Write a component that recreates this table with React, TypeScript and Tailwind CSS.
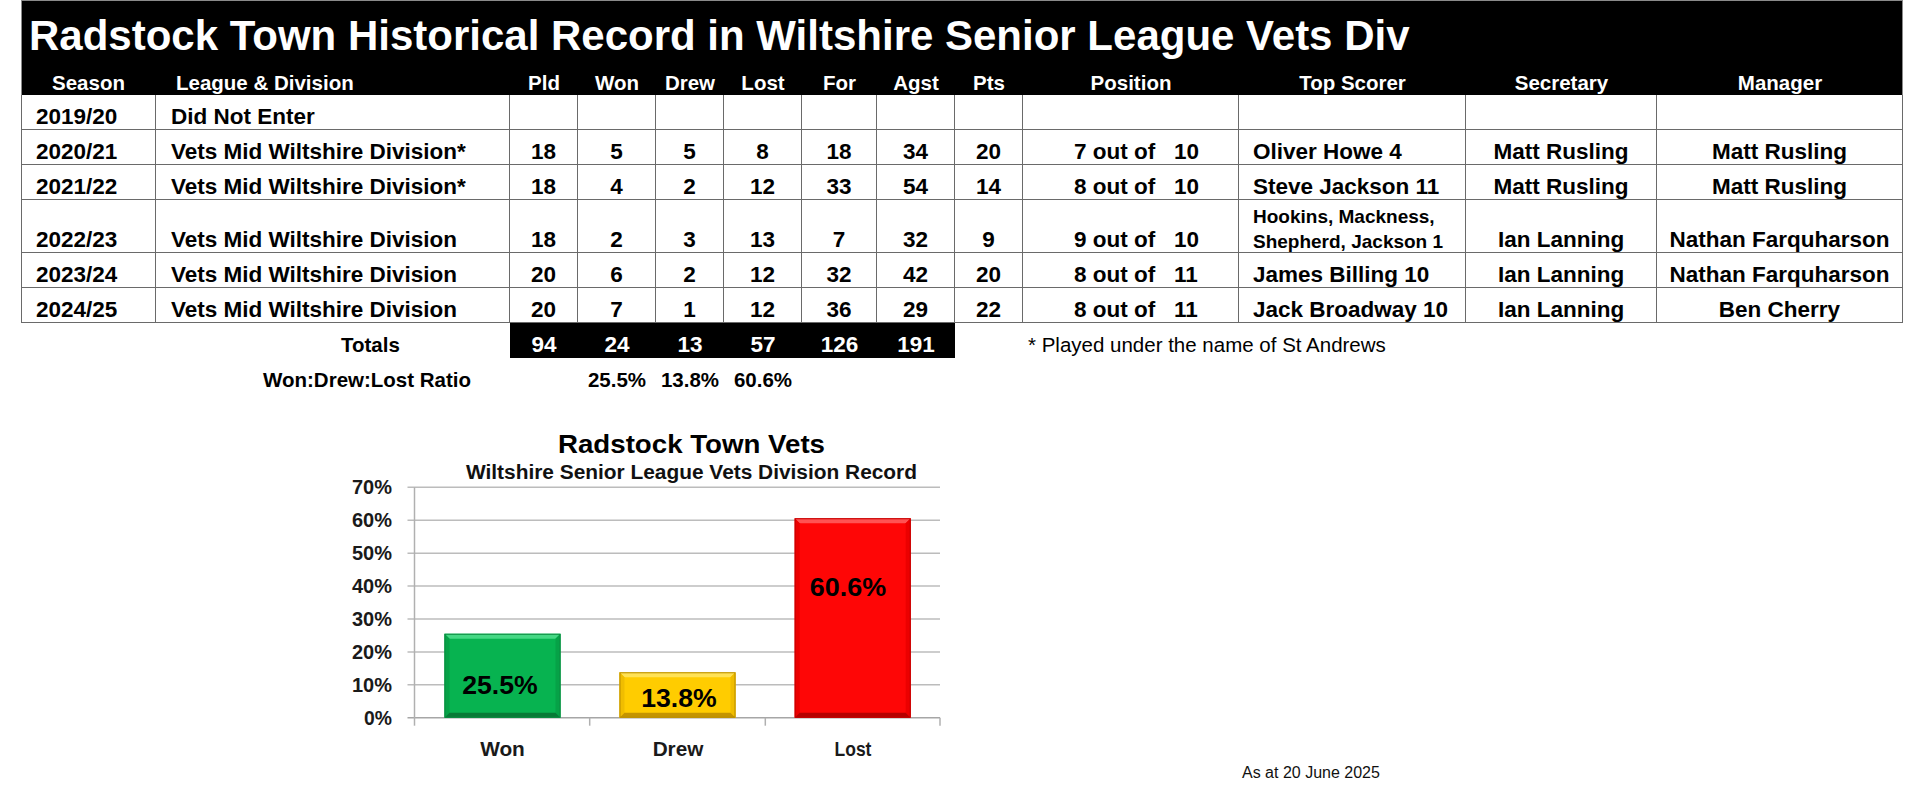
import React from "react";

type Row = {
  season: string;
  league: string;
  vals: (number | string)[];
  pos: [string, string] | null;
  scorer: string | string[];
  sec: string;
  mgr: string;
  tall?: boolean;
};

const rows: Row[] = [
  { season: "2019/20", league: "Did Not Enter", vals: ["", "", "", "", "", "", ""], pos: null, scorer: "", sec: "", mgr: "" },
  { season: "2020/21", league: "Vets Mid Wiltshire Division*", vals: [18, 5, 5, 8, 18, 34, 20], pos: ["7", "10"], scorer: "Oliver Howe 4", sec: "Matt Rusling", mgr: "Matt Rusling" },
  { season: "2021/22", league: "Vets Mid Wiltshire Division*", vals: [18, 4, 2, 12, 33, 54, 14], pos: ["8", "10"], scorer: "Steve Jackson 11", sec: "Matt Rusling", mgr: "Matt Rusling" },
  { season: "2022/23", league: "Vets Mid Wiltshire Division", vals: [18, 2, 3, 13, 7, 32, 9], pos: ["9", "10"], scorer: ["Hookins, Mackness,", "Shepherd, Jackson 1"], sec: "Ian Lanning", mgr: "Nathan Farquharson", tall: true },
  { season: "2023/24", league: "Vets Mid Wiltshire Division", vals: [20, 6, 2, 12, 32, 42, 20], pos: ["8", "11"], scorer: "James Billing 10", sec: "Ian Lanning", mgr: "Nathan Farquharson" },
  { season: "2024/25", league: "Vets Mid Wiltshire Division", vals: [20, 7, 1, 12, 36, 29, 22], pos: ["8", "11"], scorer: "Jack Broadway 10", sec: "Ian Lanning", mgr: "Ben Cherry" },
];

const numW = ["w-[68px]", "w-[78px]", "w-[68px]", "w-[78px]", "w-[75px]", "w-[78px]", "w-[68px]"];
const numHead = ["Pld", "Won", "Drew", "Lost", "For", "Agst", "Pts"];

const cellB = "flex items-end shrink-0 border-r border-b border-[#6a6a6a] leading-[24px]";

function Header() {
  return (
    <div className="w-[1882px] bg-black border-t border-l border-r border-[#8a8a8a] text-white">
      <div className="h-[61px] pt-[14px] pl-[7px] text-[42px] leading-[42px] font-bold whitespace-nowrap">
        Radstock Town Historical Record in Wiltshire Senior League Vets Div
      </div>
      <div className="flex h-[33px] items-end text-[20.5px] leading-[24px] font-bold -ml-px">
        <div className="w-[135px] shrink-0 text-center">Season</div>
        <div className="w-[354px] shrink-0 pl-[20px]">League &amp; Division</div>
        {numHead.map((h, i) => (
          <div key={h} className={`${numW[i]} shrink-0 text-center`}>
            {h}
          </div>
        ))}
        <div className="w-[216px] shrink-0 text-center">Position</div>
        <div className="w-[227px] shrink-0 text-center">Top Scorer</div>
        <div className="w-[191px] shrink-0 text-center">Secretary</div>
        <div className="w-[246px] shrink-0 text-center">Manager</div>
      </div>
    </div>
  );
}

function BodyRow({ r }: { r: Row }) {
  const h = r.tall ? "h-[53px]" : "h-[35px]";
  return (
    <div className={`flex ${h} text-[22.5px] font-bold text-black`}>
      <div className={`${cellB} border-l w-[135px] pl-[14px]`}>{r.season}</div>
      <div className={`${cellB} w-[354px] pl-[15px] whitespace-nowrap`}>{r.league}</div>
      {r.vals.map((v, i) => (
        <div key={i} className={`${cellB} ${numW[i]} justify-center`}>
          {v}
        </div>
      ))}
      <div className={`${cellB} w-[216px] pl-[51px] whitespace-pre`}>
        {r.pos ? `${r.pos[0]} out of   ${r.pos[1]}` : ""}
      </div>
      <div className={`${cellB} w-[227px] pl-[14px] whitespace-nowrap`}>
        {Array.isArray(r.scorer) ? (
          <div className="relative top-[2px] text-[19px] leading-[25px]">
            <div>{r.scorer[0]}</div>
            <div>{r.scorer[1]}</div>
          </div>
        ) : (
          r.scorer
        )}
      </div>
      <div className={`${cellB} w-[191px] justify-center whitespace-nowrap`}>{r.sec}</div>
      <div className={`${cellB} w-[246px] justify-center whitespace-nowrap`}>{r.mgr}</div>
    </div>
  );
}

const BASE = 297.7;
const K = 3.291;

function Bar({
  cx,
  value,
  face,
  light,
  side,
  dark,
  border,
}: {
  cx: number;
  value: number;
  face: string;
  light: string;
  side: string;
  dark: string;
  border: string;
}) {
  const w = 116;
  const x = cx - w / 2;
  const y = BASE - value * K;
  const h = BASE - y;
  const b = 5;
  return (
    <g>
      <rect x={x} y={y} width={w} height={h} fill={face} />
      <polygon points={`${x},${y} ${x + w},${y} ${x + w - b},${y + b} ${x + b},${y + b}`} fill={light} />
      <polygon points={`${x},${y} ${x + b},${y + b} ${x + b},${y + h - b} ${x},${y + h}`} fill={side} />
      <polygon points={`${x + w},${y} ${x + w},${y + h} ${x + w - b},${y + h - b} ${x + w - b},${y + b}`} fill={side} />
      <polygon points={`${x},${y + h} ${x + b},${y + h - b} ${x + w - b},${y + h - b} ${x + w},${y + h}`} fill={dark} />
      <rect x={x + 0.5} y={y + 0.5} width={w - 1} height={h - 1} fill="none" stroke={border} strokeWidth={1} />
    </g>
  );
}

function Chart() {
  const font = "'Liberation Sans', Arial, sans-serif";
  const grid = [0, 10, 20, 30, 40, 50, 60, 70];
  return (
    <svg width="680" height="387" viewBox="0 0 680 387" className="shrink-0 ml-[300px] block">
      <text x={391.5} y={33.3} textAnchor="middle" fontFamily={font} fontWeight="bold" fontSize={26.5} textLength={267} lengthAdjust="spacingAndGlyphs" fill="#000">
        Radstock Town Vets
      </text>
      <text x={391.5} y={59.3} textAnchor="middle" fontFamily={font} fontWeight="bold" fontSize={20} textLength={451} lengthAdjust="spacingAndGlyphs" fill="#111">
        Wiltshire Senior League Vets Division Record
      </text>
      {grid.map((g) => {
        const y = BASE - g * K;
        return (
          <g key={g}>
            <line x1={107.5} x2={640} y1={y} y2={y} stroke={g === 0 ? "#a6a6a6" : "#bcbcbc"} strokeWidth={1.5} />
            <text x={92} y={y + 7} textAnchor="end" fontFamily={font} fontWeight="bold" fontSize={20} textLength={g === 0 ? 28 : 40} lengthAdjust="spacingAndGlyphs" fill="#1a1a1a">
              {g}%
            </text>
          </g>
        );
      })}
      <line x1={114.5} x2={114.5} y1={BASE - 70 * K} y2={BASE + 8} stroke="#b0b0b0" strokeWidth={1.5} />
      {[289.7, 465.3, 640].map((x) => (
        <line key={x} x1={x} x2={x} y1={BASE} y2={BASE + 8} stroke="#b0b0b0" strokeWidth={1.5} />
      ))}
      <Bar cx={202.5} value={25.5} face="#07b350" light="#45d884" side="#06a247" dark="#077a36" border="#0b8a40" />
      <Bar cx={377.5} value={13.8} face="#ffcc00" light="#ffe255" side="#f0bd00" dark="#c49400" border="#b88c00" />
      <Bar cx={552.7} value={60.6} face="#fe0606" light="#ff5353" side="#ec0000" dark="#b50000" border="#c20000" />
      <text x={200} y={273.5} textAnchor="middle" fontFamily={font} fontWeight="bold" fontSize={26.5} textLength={75.5} lengthAdjust="spacingAndGlyphs" fill="#000">
        25.5%
      </text>
      <text x={379} y={286.7} textAnchor="middle" fontFamily={font} fontWeight="bold" fontSize={26.5} textLength={75.5} lengthAdjust="spacingAndGlyphs" fill="#000">
        13.8%
      </text>
      <text x={548} y={175.7} textAnchor="middle" fontFamily={font} fontWeight="bold" fontSize={26.5} textLength={76.3} lengthAdjust="spacingAndGlyphs" fill="#000">
        60.6%
      </text>
      <text x={202.5} y={335.7} textAnchor="middle" fontFamily={font} fontWeight="bold" fontSize={20} textLength={44.7} lengthAdjust="spacingAndGlyphs" fill="#1a1a1a">
        Won
      </text>
      <text x={378} y={335.7} textAnchor="middle" fontFamily={font} fontWeight="bold" fontSize={20} textLength={50.7} lengthAdjust="spacingAndGlyphs" fill="#1a1a1a">
        Drew
      </text>
      <text x={553} y={335.7} textAnchor="middle" fontFamily={font} fontWeight="bold" fontSize={20} textLength={36.9} lengthAdjust="spacingAndGlyphs" fill="#1a1a1a">
        Lost
      </text>
    </svg>
  );
}

export default function App() {
  return (
    <div className="w-[1920px] h-[807px] overflow-hidden bg-white font-['Liberation_Sans',Arial,sans-serif] text-black">
      <div className="pl-[21px]">
        <Header />
        {rows.map((r) => (
          <BodyRow key={r.season} r={r} />
        ))}
        <div className="flex h-[35px] items-end leading-[24px]">
          <div className="w-[489px] shrink-0 pl-[320px] pb-[1px] text-[20.5px] font-bold">Totals</div>
          <div className="flex h-[35px] w-[445px] shrink-0 items-end bg-black pb-[1px] text-[22.5px] font-bold text-white">
            {[94, 24, 13, 57, 126, 191].map((v, i) => (
              <div key={i} className={`${numW[i]} shrink-0 text-center`}>
                {v}
              </div>
            ))}
          </div>
          <div className="ml-[73px] pb-[1px] text-[20.5px] whitespace-nowrap">* Played under the name of St Andrews</div>
        </div>
        <div className="flex h-[42px] pt-[10px] leading-[24px] text-[20.5px] font-bold">
          <div className="w-[489px] shrink-0 pl-[242px] whitespace-nowrap">Won:Drew:Lost Ratio</div>
          <div className="w-[68px] shrink-0" />
          <div className="w-[78px] shrink-0 text-center">25.5%</div>
          <div className="w-[68px] shrink-0 text-center">13.8%</div>
          <div className="w-[78px] shrink-0 text-center">60.6%</div>
        </div>
      </div>
      <div className="flex mt-[20px] h-[387px]">
        <Chart />
        <div className="ml-[262px] mt-[344px] text-[16px] leading-[18px] whitespace-nowrap text-[#111]">As at 20 June 2025</div>
      </div>
    </div>
  );
}
